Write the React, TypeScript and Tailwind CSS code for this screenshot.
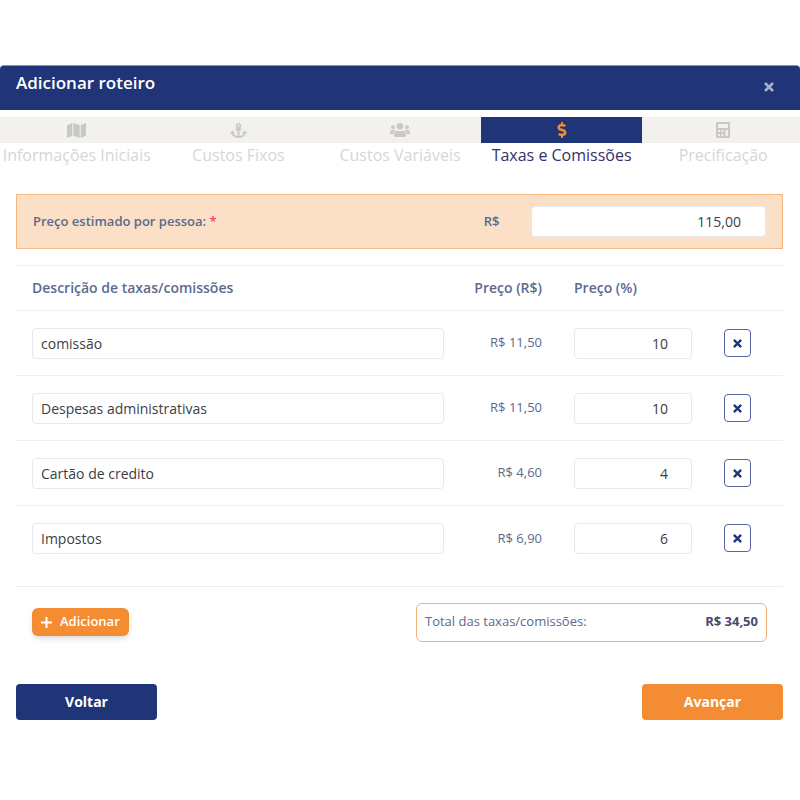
import { useState } from "react";
import type { ReactNode } from "react";
import { FaAnchor, FaDollarSign, FaMap } from "react-icons/fa";

interface Fee {
  id: number;
  description: string;
  price: string;
  percent: string;
}

interface Step {
  label: string;
  icon: ReactNode;
}

const initialFees: Fee[] = [
  { id: 1, description: "comissão", price: "R$ 11,50", percent: "10" },
  { id: 2, description: "Despesas administrativas", price: "R$ 11,50", percent: "10" },
  { id: 3, description: "Cartão de credito", price: "R$ 4,60", percent: "4" },
  { id: 4, description: "Impostos", price: "R$ 6,90", percent: "6" },
];

function UsersIcon() {
  return (
    <svg viewBox="0 0 20 16" className="h-4 w-5" fill="currentColor" aria-hidden="true">
      <circle cx="10" cy="4.3" r="3.3" />
      <circle cx="3" cy="5.3" r="2" />
      <circle cx="17" cy="5.3" r="2" />
      <path d="M7 9h6a3 3 0 0 1 3 3v1.500a1.500 1.500 0 0 1-1.500 1.500h-9A1.500 1.500 0 0 1 4 13.500V12a3 3 0 0 1 3-3z" />
      <path d="M2 8h3l1 .5A4 4 0 0 0 3 12H1a1 1 0 0 1-1-1v-1a2 2 0 0 1 2-2z" />
      <path d="M18 8h-3l-1 .5a4 4 0 0 1 3 3.500h2a1 1 0 0 0 1-1v-1a2 2 0 0 0-2-2z" />
    </svg>
  );
}

function CalculatorIcon() {
  return (
    <svg viewBox="0 0 14 16" className="h-4 w-3.5" fill="currentColor" aria-hidden="true">
      <path
        fillRule="evenodd"
        d="M1 0h12a1 1 0 0 1 1 1v14a1 1 0 0 1-1 1H1a1 1 0 0 1-1-1V1a1 1 0 0 1 1-1zM2 2v4h10V2zM2 8v2h2V8zM5.500 8v2h2V8zM9.500 8v6H12V8zM2 12v2h2v-2zM5.500 12v2h2v-2z"
      />
    </svg>
  );
}

function CloseIcon({ className }: { className: string }) {
  return (
    <svg
      viewBox="0 0 10 10"
      className={className}
      fill="none"
      stroke="currentColor"
      strokeWidth="2.6"
      aria-hidden="true"
    >
      <path d="M1 1l8 8M9 1l-8 8" />
    </svg>
  );
}

const steps: Step[] = [
  { label: "Informações Iniciais", icon: <FaMap className="h-[17px] w-[19px]" /> },
  { label: "Custos Fixos", icon: <FaAnchor className="size-[17px]" /> },
  { label: "Custos Variáveis", icon: <UsersIcon /> },
  { label: "Taxas e Comissões", icon: <FaDollarSign className="size-4" /> },
  { label: "Precificação", icon: <CalculatorIcon /> },
];

const inputClass =
  "block h-[31px] w-full rounded border border-[#e6e8ee] bg-white text-sm text-[#3c3e43] focus:border-[#203577] focus:outline-none";

export default function App() {
  const [activeStep, setActiveStep] = useState(3);
  const [estimate, setEstimate] = useState("115,00");
  const [fees, setFees] = useState(initialFees);

  function updateFee(id: number, changes: Partial<Fee>) {
    setFees(fees.map((fee) => (fee.id === id ? { ...fee, ...changes } : fee)));
  }

  function addFee() {
    setFees([...fees, { id: Date.now(), description: "", price: "R$ 0,00", percent: "0" }]);
  }

  return (
    <div className="min-h-screen overflow-x-hidden bg-white pt-[65px] font-['Open_Sans',sans-serif] text-[13px] text-[#5c6a8d]">
      <header className="flex h-[45px] items-start justify-between rounded-t border-t border-[#8d93a8] bg-[#203577] px-4 pt-[3px] text-white">
        <h1 className="text-[17px] leading-7 font-semibold">Adicionar roteiro</h1>
        <button type="button" aria-label="Fechar" className="p-2.5 pt-[13px] text-[#a6aec9]">
          <CloseIcon className="size-[10px]" />
        </button>
      </header>

      <nav className="-mx-1 mt-[7px] grid grid-cols-5">
        {steps.map((step, i) => (
          <button
            key={step.label}
            type="button"
            onClick={() => setActiveStep(i)}
            className={`text-base leading-6 whitespace-nowrap ${
              i === activeStep ? "text-[#37306f]" : "text-[#d6d6d6]"
            }`}
          >
            <span
              className={`flex h-[26px] items-center justify-center ${
                i === activeStep ? "bg-[#203577] text-[#f48c34]" : "bg-[#f2f1ed] text-[#c9c8c4]"
              }`}
            >
              {step.icon}
            </span>
            {step.label}
          </button>
        ))}
      </nav>

      <main className="pt-[27px] pr-[17px] pl-4">
        <section className="flex h-[55px] items-center border border-[#f9b77e] bg-[#fbdfc7] px-4 font-semibold">
          <label htmlFor="estimate" className="flex-1">
            Preço estimado por pessoa: <span className="text-[#fb3f5f]">*</span>
          </label>
          <span className="mr-8">R$</span>
          <div className="w-[32%]">
            <input
              id="estimate"
              value={estimate}
              onChange={(e) => setEstimate(e.target.value)}
              className={`${inputClass} pr-6 pl-2 text-right font-normal`}
            />
          </div>
        </section>

        <table className="mt-4 w-full table-fixed border-t border-[#edeff2]">
          <colgroup>
            <col />
            <col className="w-[98px]" />
            <col className="w-[150px]" />
            <col className="w-[75px]" />
          </colgroup>
          <thead>
            <tr className="h-[45px] border-b border-[#edeff2] text-left text-sm whitespace-nowrap">
              <th className="px-4 font-semibold">Descrição de taxas/comissões</th>
              <th className="pr-4 text-right font-semibold">Preço (R$)</th>
              <th className="px-4 font-semibold">Preço (%)</th>
              <th aria-label="Ações" />
            </tr>
          </thead>
          <tbody>
            {fees.map((fee) => (
              <tr key={fee.id} className="h-[65px] border-b border-[#edeff2] last:border-b-0">
                <td className="px-4">
                  <input
                    aria-label="Descrição"
                    value={fee.description}
                    onChange={(e) => updateFee(fee.id, { description: e.target.value })}
                    className={`${inputClass} px-2`}
                  />
                </td>
                <td className="pr-4 text-right">{fee.price}</td>
                <td className="px-4">
                  <input
                    aria-label="Preço (%)"
                    value={fee.percent}
                    onChange={(e) => updateFee(fee.id, { percent: e.target.value })}
                    className={`${inputClass} pr-[23px] pl-2 text-right`}
                  />
                </td>
                <td className="pl-4">
                  <button
                    type="button"
                    aria-label="Remover"
                    onClick={() => setFees(fees.filter((f) => f.id !== fee.id))}
                    className="flex h-7 w-[27px] items-center justify-center rounded border border-[#5665a0] text-[#203577]"
                  >
                    <CloseIcon className="size-[9px]" />
                  </button>
                </td>
              </tr>
            ))}
          </tbody>
        </table>

        <section className="mt-[15px] flex items-center justify-between border-t border-[#e8eff4] px-4 pt-4">
          <button
            type="button"
            onClick={addFee}
            className="flex h-7 items-center gap-2 rounded-md bg-[#f48c34] px-[9px] font-semibold text-white shadow-md"
          >
            <svg viewBox="0 0 11 11" className="size-[11px]" stroke="currentColor" strokeWidth="2" aria-hidden="true">
              <path d="M5.500 0v11M0 5.500h11" />
            </svg>
            Adicionar
          </button>
          <div className="flex h-[39px] w-[351px] items-center justify-between rounded-md border border-[#f9b077] px-2">
            <span>Total das taxas/comissões:</span>
            <strong className="font-bold text-[#4a4770]">R$ 34,50</strong>
          </div>
        </section>

        <footer className="mt-[42px] flex justify-between text-sm font-bold text-white">
          <button type="button" className="h-9 w-[141px] rounded bg-[#203577]">
            Voltar
          </button>
          <button type="button" className="h-9 w-[141px] rounded bg-[#f48c34]">
            Avançar
          </button>
        </footer>
      </main>
    </div>
  );
}
